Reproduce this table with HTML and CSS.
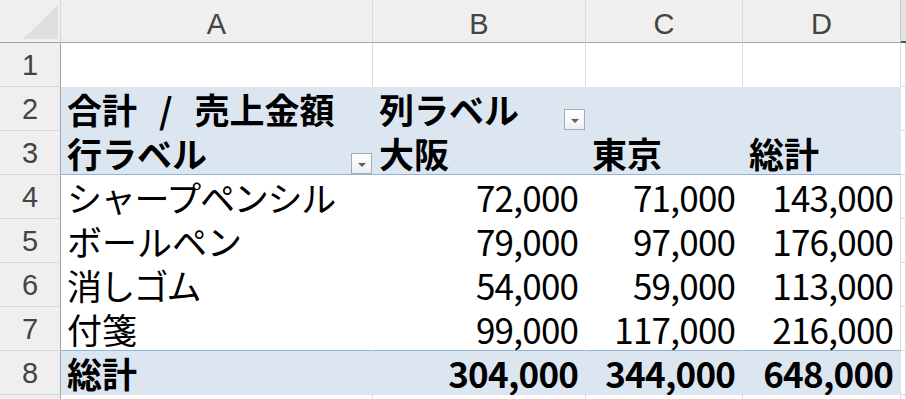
FILE: index.html
```html
<!DOCTYPE html>
<html lang="ja">
<head>
<meta charset="utf-8">
<link rel="stylesheet" href="styles.css">
</head>
<body>
<div class="sheet">
  <!-- column headers -->
  <div class="corner"><svg class="tri" width="35" height="34" viewBox="0 0 35 34"><polygon points="0,34 35,34 35,0" fill="#dfdfdf"/></svg></div>
  <div class="ch">A</div>
  <div class="ch">B</div>
  <div class="ch">C</div>
  <div class="ch last">D</div>
  <div class="ch sel"></div>

  <!-- row 1 -->
  <div class="rh">1</div>
  <div class="c r1"></div><div class="c r1"></div><div class="c r1"></div><div class="c r1"></div><div class="c e"></div>

  <!-- row 2 -->
  <div class="rh">2</div>
  <div class="c hd"><span class="t b ws">合計 / 売上金額</span></div>
  <div class="c hd sb"><span class="t b">列ラベル</span><span class="dd"><i></i></span></div>
  <div class="c hd"></div>
  <div class="c hd"></div>
  <div class="c e"></div>

  <!-- row 3 -->
  <div class="rh">3</div>
  <div class="c hd line sb"><span class="t b">行ラベル</span><span class="dd"><i></i></span></div>
  <div class="c hd line"><span class="t b">大阪</span></div>
  <div class="c hd line"><span class="t b">東京</span></div>
  <div class="c hd line"><span class="t b">総計</span></div>
  <div class="c e"></div>

  <!-- row 4 -->
  <div class="rh">4</div>
  <div class="c bd"><span class="t kana1">シャープペンシル</span></div>
  <div class="c bd n"><span class="t">72,000</span></div>
  <div class="c bd n"><span class="t">71,000</span></div>
  <div class="c bd n dl"><span class="t">143,000</span></div>
  <div class="c e"></div>

  <!-- row 5 -->
  <div class="rh">5</div>
  <div class="c bd"><span class="t">ボールペン</span></div>
  <div class="c bd n"><span class="t">79,000</span></div>
  <div class="c bd n"><span class="t">97,000</span></div>
  <div class="c bd n dl"><span class="t">176,000</span></div>
  <div class="c e"></div>

  <!-- row 6 -->
  <div class="rh">6</div>
  <div class="c bd"><span class="t kana2">消しゴム</span></div>
  <div class="c bd n"><span class="t">54,000</span></div>
  <div class="c bd n"><span class="t">59,000</span></div>
  <div class="c bd n dl"><span class="t">113,000</span></div>
  <div class="c e"></div>

  <!-- row 7 -->
  <div class="rh">7</div>
  <div class="c bd line"><span class="t">付箋</span></div>
  <div class="c bd n line"><span class="t">99,000</span></div>
  <div class="c bd n line"><span class="t">117,000</span></div>
  <div class="c bd n line dl"><span class="t">216,000</span></div>
  <div class="c e"></div>

  <!-- row 8 -->
  <div class="rh">8</div>
  <div class="c hd"><span class="t b">総計</span></div>
  <div class="c hd n"><span class="t b">304,000</span></div>
  <div class="c hd n"><span class="t b">344,000</span></div>
  <div class="c hd n"><span class="t b">648,000</span></div>
  <div class="c e"></div>

  <!-- row 9 (only its top edge is visible) -->
  <div class="rh"></div>
  <div class="c"></div><div class="c"></div><div class="c"></div><div class="c"></div><div class="c e"></div>
</div>
</body>
</html>
```
FILE: styles.css
```css
html, body {
  margin: 0;
  padding: 0;
  background: #ffffff;
  overflow: hidden;
}

.sheet {
  display: grid;
  grid-template-columns: 61px 312px 213px 157px 158px 1fr;
  grid-template-rows: 43px repeat(9, 44px);
  width: 906px;
  height: 399px;
  overflow: hidden;
}

.sheet > div {
  box-sizing: border-box;
  min-width: 0;
}

/* corner */
.corner {
  background: #efefef;
  border-right: 1px solid #d4d4d4;
  border-bottom: 1px solid #a3a3a3;
  display: flex;
  justify-content: flex-end;
  align-items: flex-end;
  padding: 0 2px 3px 0;
}
.tri { display: block; }

/* column headers */
.ch {
  background: #efefef;
  border-right: 1px solid #d9d9d9;
  border-bottom: 1px solid #a3a3a3;
  display: flex;
  justify-content: center;
  align-items: flex-end;
  font-family: "Liberation Sans", Arial, sans-serif;
  font-size: 29px;
  color: #444444;
  line-height: 34px;
  padding-bottom: 1px;
}
.ch.last { border-right: 1px solid #c4c4c4; }
.ch.sel {
  background: #e3e3e3;
  border-right: none;
  border-bottom: 2px solid #217346;
}

/* row headers */
.rh {
  background: #efefef;
  border-right: 1px solid #a3a3a3;
  border-bottom: 1px solid #d6d6d6;
  display: flex;
  justify-content: center;
  align-items: flex-end;
  font-family: "Liberation Sans", Arial, sans-serif;
  font-size: 29px;
  color: #444444;
  line-height: 34px;
  padding-bottom: 4px;
}

/* cells */
.c {
  background: #ffffff;
  border-right: 1px solid #dadada;
  border-bottom: 1px solid #dadada;
  display: flex;
  align-items: flex-end;
  padding: 0 6px 0 6px;
  font-family: "Noto Sans CJK JP", sans-serif;
  font-size: 35px;
  color: #000000;
  white-space: nowrap;
}
.c.r1 { border-bottom-color: #ffffff; }
.c.e { padding: 0; }

.hd {
  background: #dce6f1;
  border-right-color: #dce6f1;
  border-bottom-color: #dce6f1;
}
.bd {
  border-right-color: #ffffff;
  border-bottom-color: #ffffff;
}
.bd.dl { border-right-color: #dadada; }
.c.line { border-bottom-color: #95b3d7; }

.n { justify-content: flex-end; padding-right: 6px; }
.n .t { letter-spacing: -0.75px; margin-right: 0.75px; }
.sb { justify-content: space-between; padding-right: 0; }

.t {
  display: block;
  line-height: 40px;
  padding-bottom: 1px;
}
.b { font-weight: bold; }
.ws { word-spacing: 14px; }
.kana1 { letter-spacing: -1.25px; }
.kana2 { letter-spacing: -1.8px; }

/* pivot dropdown button */
.dd {
  width: 21px;
  height: 21px;
  box-sizing: border-box;
  border: 1px solid #a6abb2;
  background: linear-gradient(#ffffff, #eceff3);
  display: flex;
  justify-content: center;
  align-items: center;
  flex: none;
}
.dd i {
  display: block;
  width: 0;
  height: 0;
  margin-top: 3px;
  border-left: 4px solid transparent;
  border-right: 4px solid transparent;
  border-top: 4px solid #5f5f5f;
}
```
